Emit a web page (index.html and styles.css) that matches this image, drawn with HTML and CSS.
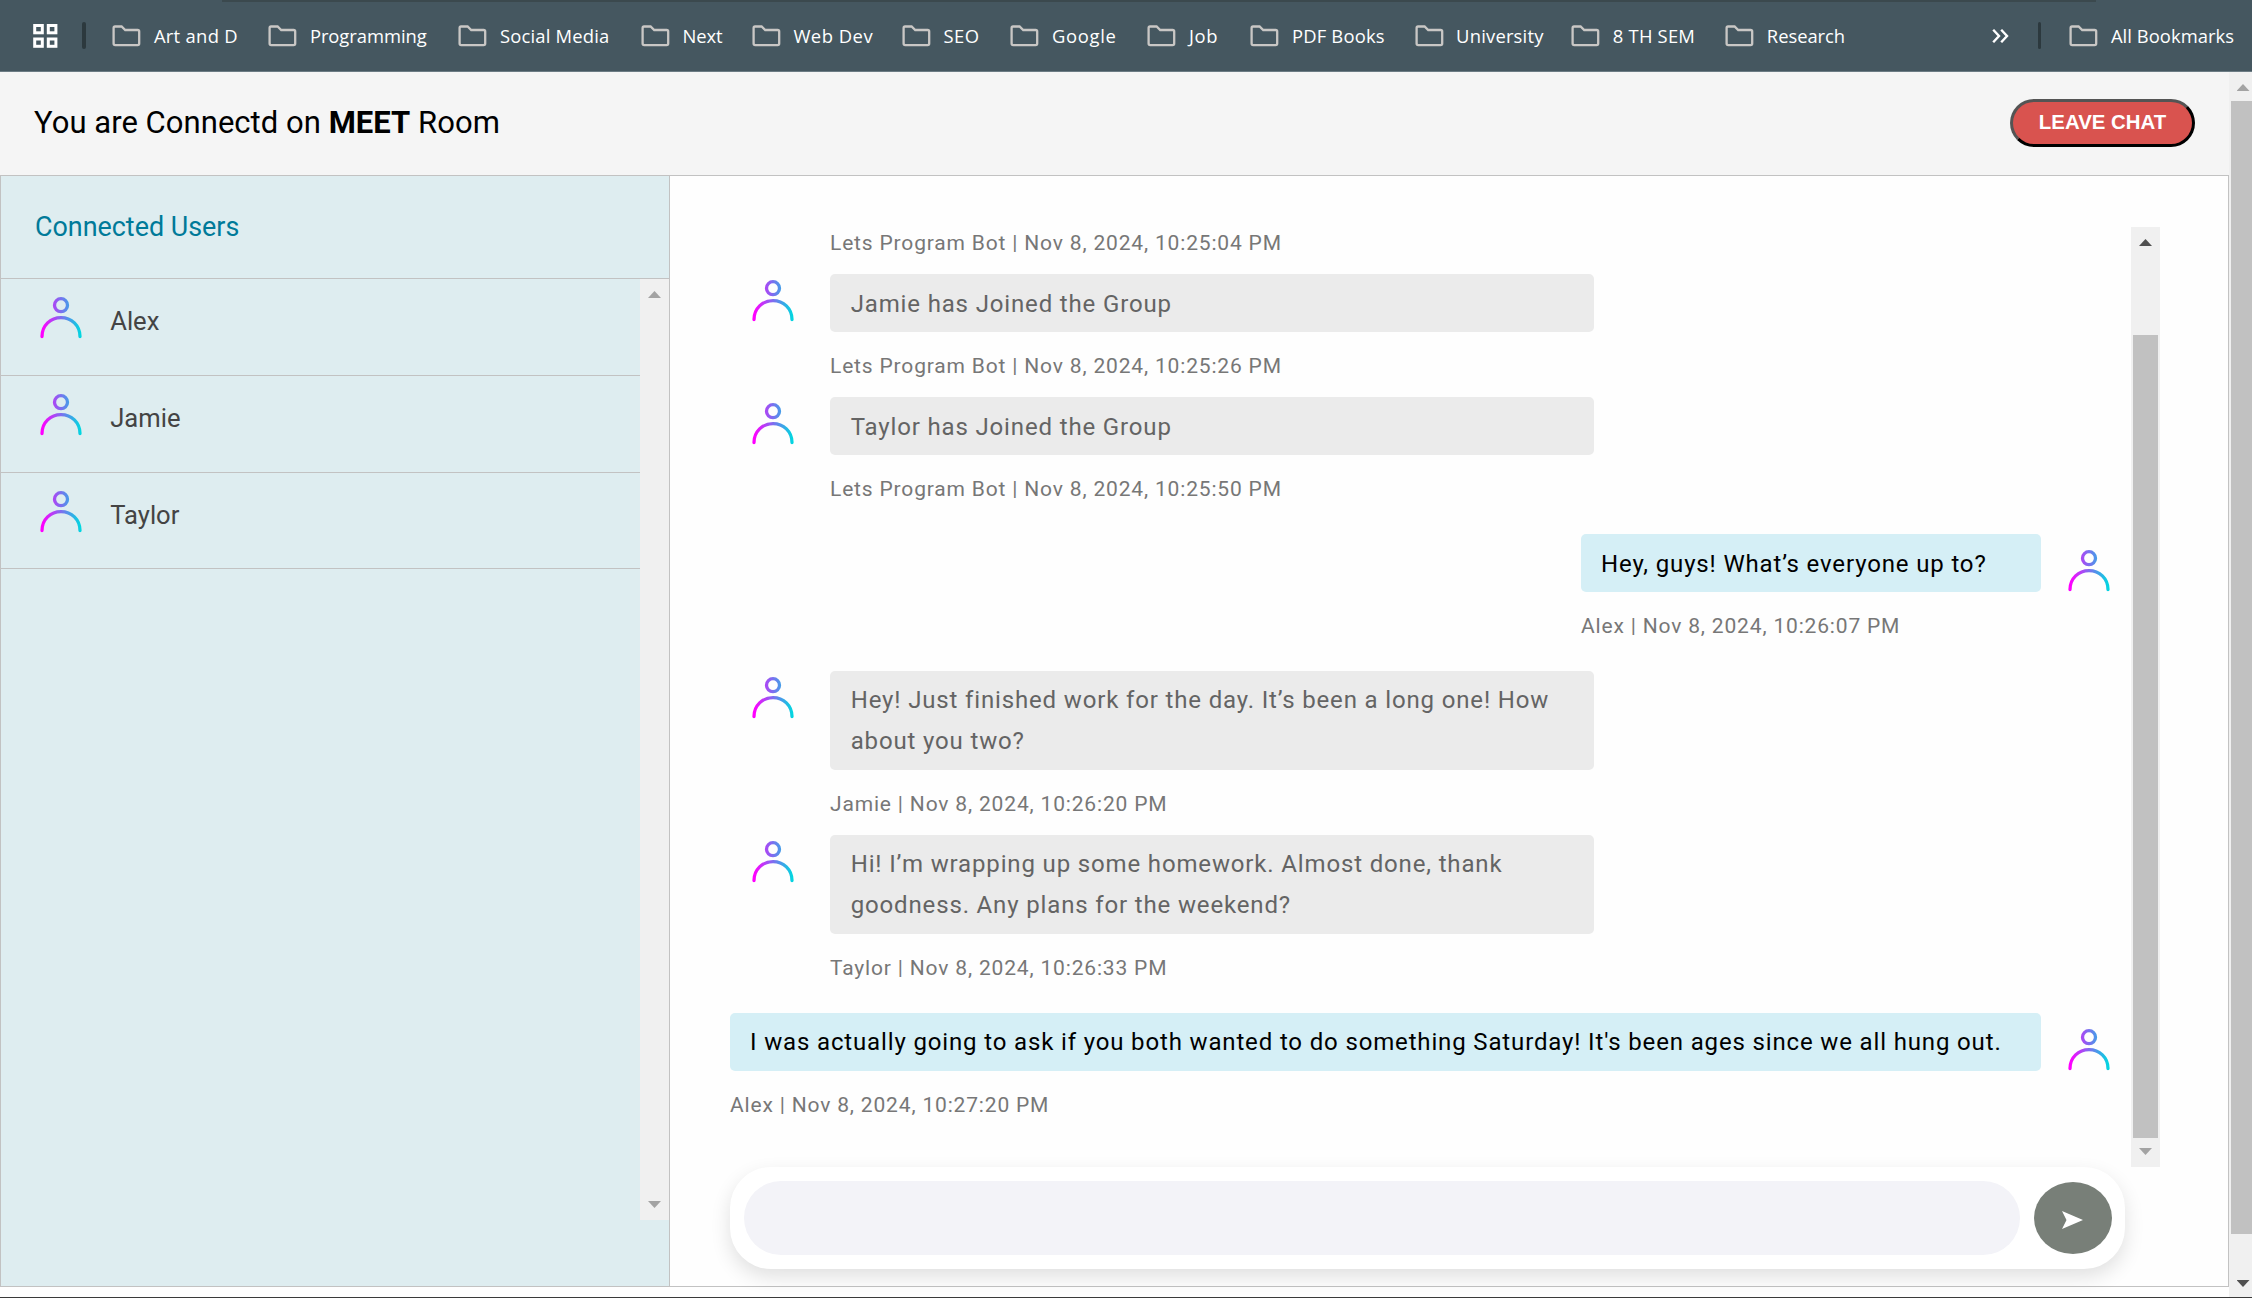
FILE: index.html
```
<!DOCTYPE html>
<html lang="en">
<head>
<meta charset="utf-8">
<title>MEET Room</title>
<link rel="stylesheet" href="styles.css">
</head>
<body>
<svg class="defs" width="0" height="0" aria-hidden="true">
  <defs>
    <linearGradient id="tone" gradientUnits="userSpaceOnUse" x1="2" y1="24" x2="40" y2="22">
      <stop offset="0" stop-color="#ff00ff"/><stop offset="1" stop-color="#00d8e0"/>
    </linearGradient>
    <symbol id="avatar" viewBox="0 0 42 42">
      <g fill="none" stroke="url(#tone)" stroke-width="3.3" stroke-linecap="round">
        <circle cx="21" cy="8.2" r="6.5"/>
        <path d="M2 39.6C2 28.5 10.6 20.6 21 20.6S40 28.5 40 39.6"/>
      </g>
    </symbol>
    <symbol id="folder" viewBox="0 0 29 22">
      <path d="M3 1.5H9.6L13.2 5H25.6Q27.2 5 27.2 6.6V18.6Q27.2 20.2 25.6 20.2H3.2Q1.6 20.2 1.6 18.6V3Q1.6 1.5 3 1.5Z" fill="none" stroke="#c9c7c5" stroke-width="2.3"/>
    </symbol>
  </defs>
</svg>

<nav class="bookmarks">
  <svg class="apps" viewBox="0 0 25 24" fill="none" stroke="#fff" stroke-width="3">
    <rect x="1.7" y="1.5" width="7.6" height="7.3"/><rect x="15.3" y="1.5" width="7.6" height="7.3"/>
    <rect x="1.7" y="15" width="7.6" height="7.3"/><rect x="15.3" y="15" width="7.6" height="7.3"/>
  </svg>
  <i class="divider"></i>
  <div class="folders">
    <span class="bm"><svg><use href="#folder"/></svg>Art and D</span>
    <span class="bm"><svg><use href="#folder"/></svg>Programming</span>
    <span class="bm"><svg><use href="#folder"/></svg>Social Media</span>
    <span class="bm"><svg><use href="#folder"/></svg>Next</span>
    <span class="bm"><svg><use href="#folder"/></svg>Web Dev</span>
    <span class="bm"><svg><use href="#folder"/></svg>SEO</span>
    <span class="bm"><svg><use href="#folder"/></svg>Google</span>
    <span class="bm"><svg><use href="#folder"/></svg>Job</span>
    <span class="bm"><svg><use href="#folder"/></svg>PDF Books</span>
    <span class="bm"><svg><use href="#folder"/></svg>University</span>
    <span class="bm"><svg><use href="#folder"/></svg>8 TH SEM</span>
    <span class="bm"><svg><use href="#folder"/></svg>Research</span>
  </div>
  <svg class="more" viewBox="0 0 17 14" fill="none" stroke="#fff" stroke-width="2.4"><path d="M1.2 .8L7 7L1.2 13.2M9.2 .8L15 7L9.2 13.2"/></svg>
  <i class="divider"></i>
  <span class="bm all"><svg><use href="#folder"/></svg>All Bookmarks</span>
</nav>

<div class="viewport">
  <div class="page">
    <header class="header">
      <h1>You are Connectd on <b>MEET</b> Room</h1>
      <button class="leave">LEAVE CHAT</button>
    </header>
    <div class="room">
      <aside class="users">
        <h2>Connected Users</h2>
        <div class="users-body">
          <ul>
            <li><svg class="avatar"><use href="#avatar"/></svg><span>Alex</span></li>
            <li><svg class="avatar"><use href="#avatar"/></svg><span>Jamie</span></li>
            <li><svg class="avatar"><use href="#avatar"/></svg><span>Taylor</span></li>
          </ul>
          <div class="scrollbar"><i class="up"></i><i class="down"></i></div>
        </div>
      </aside>
      <main class="chat">
        <div class="log">
          <div class="messages">
            <p class="meta first">Lets Program Bot | Nov 8, 2024, 10:25:04 PM</p>
            <div class="msg in notice"><svg class="avatar"><use href="#avatar"/></svg><div class="body"><p class="bubble">Jamie has Joined the Group</p><p class="meta">Lets Program Bot | Nov 8, 2024, 10:25:26 PM</p></div></div>
            <div class="msg in notice"><svg class="avatar"><use href="#avatar"/></svg><div class="body"><p class="bubble">Taylor has Joined the Group</p><p class="meta">Lets Program Bot | Nov 8, 2024, 10:25:50 PM</p></div></div>
            <div class="msg out"><div class="body short"><p class="bubble">Hey, guys! What’s everyone up to?</p><p class="meta">Alex | Nov 8, 2024, 10:26:07 PM</p></div><svg class="avatar"><use href="#avatar"/></svg></div>
            <div class="msg in"><svg class="avatar"><use href="#avatar"/></svg><div class="body"><p class="bubble">Hey! Just finished work for the day. It’s been a long one! How about you two?</p><p class="meta">Jamie | Nov 8, 2024, 10:26:20 PM</p></div></div>
            <div class="msg in"><svg class="avatar"><use href="#avatar"/></svg><div class="body"><p class="bubble">Hi! I’m wrapping up some homework. Almost done, thank goodness. Any plans for the weekend?</p><p class="meta">Taylor | Nov 8, 2024, 10:26:33 PM</p></div></div>
            <div class="msg out"><div class="body full"><p class="bubble">I was actually going to ask if you both wanted to do something Saturday! It's been ages since we all hung out.</p><p class="meta">Alex | Nov 8, 2024, 10:27:20 PM</p></div><svg class="avatar"><use href="#avatar"/></svg></div>
          </div>
          <div class="scrollbar"><i class="up active"></i><i class="thumb"></i><i class="down"></i></div>
        </div>
        <form class="composer">
          <input type="text" aria-label="Message">
          <button type="button" class="send" aria-label="Send"><svg viewBox="0 0 21 18"><path d="M0 0L21 9L0 18L4.5 9Z" fill="#fff"/></svg></button>
        </form>
      </main>
    </div>
  </div>
  <div class="scrollbar"><i class="up"></i><i class="thumb"></i><i class="down active"></i></div>
</div>
<div class="taskbar"></div>
</body>
</html>
```
FILE: styles.css
```
* { box-sizing: border-box; }
body { margin: 0; width: 2252px; height: 1298px; overflow: hidden; display: flex; flex-direction: column; background: #fefefe; font-family: Roboto, sans-serif; }
h1, h2, p, ul { margin: 0; padding: 0; }
i { display: block; }
.defs { position: absolute; }

/* Bookmarks bar */
.bookmarks { height: 72px; flex: none; display: flex; align-items: center; padding-left: 32.5px; background: linear-gradient(#3b494e, #3b494e) 222px 0 / 1874px 2px no-repeat #455760; border-bottom: 1px solid #6c7c84; font: 18.4px "Open Sans", "Noto Sans", sans-serif; color: #fff; }
.apps { width: 25px; height: 24px; }
.divider { width: 3.5px; height: 27px; margin-left: 24.8px; border-radius: 2px; background: #2c393e; }
.folders { flex: none; width: 1879.5px; margin-left: 26.7px; display: grid; grid-template-columns: 156px 190px 182.5px 111px 150px 108.5px 137px 103px 164.2px 156.8px 154px 1fr; }
.bm { display: flex; align-items: center; gap: 12.4px; white-space: nowrap; letter-spacing: .2px; }
.bm svg { width: 29px; height: 22px; flex: none; }
.bm:nth-child(1) { letter-spacing: .3px; }
.bm:nth-child(2), .bm:nth-child(4), .bm:nth-child(12) { letter-spacing: -.05px; }
.bm:nth-child(3) { letter-spacing: .2px; }
.bm:nth-child(5), .bm:nth-child(6) { letter-spacing: .5px; }
.bm:nth-child(7), .bm:nth-child(8) { letter-spacing: .7px; }
.more { width: 17px; height: 14px; }
.more + .divider { margin-left: 29px; }
.bm.all { margin-left: 28px; letter-spacing: .05px; }

/* Page frame */
.viewport { height: 1225px; display: flex; }
.page { width: 2229px; display: flex; flex-direction: column; }
.header { height: 103px; flex: none; display: flex; align-items: center; justify-content: space-between; padding: 0 34px 2px; background: #f5f5f5; }
h1 { font-size: 31px; font-weight: 400; line-height: 40px; letter-spacing: .04px; color: #000; }
.leave { width: 185px; height: 48px; padding: 0; border: 3px outset #000; border-radius: 24px; background: #d9534f; color: #fff; font: bold 20.4px "Liberation Sans", sans-serif; }
.room { height: 1112px; display: flex; border: 1px solid #c2c2c2; }

/* Users */
.users { width: 669px; flex: none; border-right: 1px solid #c2c2c2; background: #deedf0; }
h2 { height: 103px; padding-left: 34px; border-bottom: 1px solid #c2c2c2; font-size: 26.9px; font-weight: 400; line-height: 103px; color: #007a99; }
.users-body { height: 941px; display: flex; }
ul { flex: 1; list-style: none; }
li { height: 97px; padding: 18px 0 0 38.5px; display: flex; gap: 28.7px; border-bottom: 1px solid #c2c2c2; font-size: 25.6px; line-height: 48px; color: #444; }
li:last-child { height: 96px; }
.avatar { width: 42px; height: 42px; flex: none; }

/* Scrollbars */
.scrollbar { width: 29px; flex: none; display: flex; flex-direction: column; align-items: center; background: #f0f0f0; }
.up, .down { width: 13px; height: 7px; background: #a3a3a3; }
.up { margin-top: 12px; clip-path: polygon(50% 0, 100% 100%, 0 100%); }
.down { margin: auto 0 12px; clip-path: polygon(0 0, 100% 0, 50% 100%); }
.active { background: #505050; }
.thumb { background: #c1c1c1; }
.viewport > .scrollbar { width: 23px; }
.viewport > .scrollbar .thumb { width: 21px; height: 1133px; margin: 10px 0 0 2px; }
.viewport > .scrollbar .up { margin-left: 5px; }
.viewport > .scrollbar .down { margin: auto 0 10px 5px; }
.log .thumb { width: 25px; height: 803px; margin-top: 89px; }

/* Chat */
.chat { flex: 1; padding: 51px 0 0 60px; }
.log { width: 1430px; height: 940px; display: flex; }
.messages { flex: 1; padding: 1px 21.5px 0; }
.msg { display: flex; }
.msg .avatar { margin-top: 6px; }
.in { gap: 36.5px; }
.out { gap: 26.5px; justify-content: flex-end; margin: 14px 0; }
.msg.out .avatar { margin-top: 16px; }
.body { width: 764px; }
.short { width: 460px; }
.full { width: 1311px; margin-left: -22px; flex: none; }
.bubble { padding: 9px 20px 8px 20.7px; border-radius: 5px; font-size: 24px; line-height: 41px; letter-spacing: .85px; background: #ebebeb; color: #646464; }
.notice .bubble, .short .bubble { padding-top: 10px; padding-bottom: 7px; }
.out .bubble { padding-left: 20px; background: #d5eff6; color: #000; white-space: nowrap; }
.meta { margin: 19px 0 16px; font-size: 21px; line-height: 30px; letter-spacing: .83px; color: #777; white-space: nowrap; }
.first { margin: 0 0 16px 78.5px; }

/* Composer */
.composer { width: 1395px; height: 102px; padding: 0 13px 0 14px; display: flex; align-items: center; gap: 14px; border-radius: 41px; background: #fff; box-shadow: 0 8px 20px rgba(0, 0, 0, .12); }
.composer input { flex: 1; height: 74px; border: 0; border-radius: 37px; background: #f3f3f8; }
.send { width: 78px; height: 72px; padding: 3px 1px 0 0; border: 0; border-radius: 50%; background: #787f78; display: grid; place-items: center; }
.send svg { width: 21px; height: 18px; }

.taskbar { height: 1px; background: #3a3a3a; }
```
